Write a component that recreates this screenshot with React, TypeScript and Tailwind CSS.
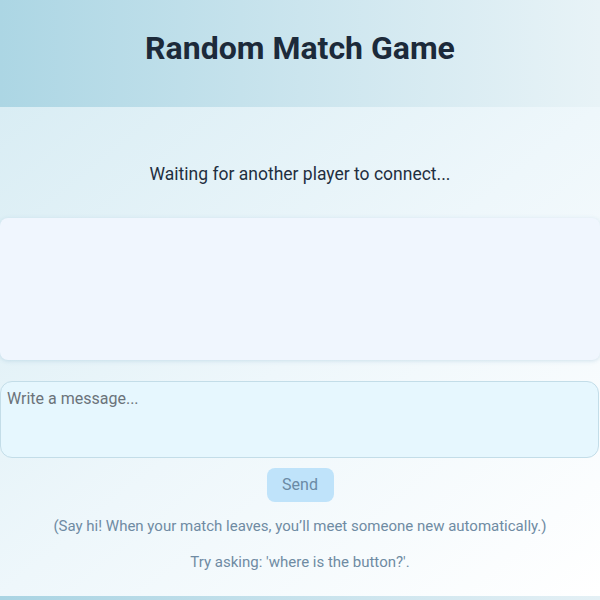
import { useState } from "react";

export default function App() {
  const [msg, setMsg] = useState("");

  return (
    <div className="min-h-[600px] bg-gradient-to-r from-[#a9d4e3] to-[#e4f0f5] font-['Roboto',sans-serif]">
      {/* header */}
      <header className="flex h-[107px] items-center justify-center bg-gradient-to-r from-[#acd6e4] via-[#cbe5ee] to-[#e8f3f7] shadow-[0_2px_6px_rgba(80,140,170,0.35)]">
        <h1 className="pb-3 text-[32px] font-bold text-[#1c2a3a]">Random Match Game</h1>
      </header>

      {/* main panel */}
      <main className="h-[489px] bg-gradient-to-br from-[#d9edf4] via-[#eef7fb] to-[#ffffff] pt-[54px]">
        <p className="text-center text-[17.5px] text-[#1f2f40]">Waiting for another player to connect...</p>

        <div className="mt-[31px] h-[142px] rounded-lg bg-[#f0f6fe] shadow-[0_1px_4px_rgba(120,170,200,0.3)]" />

        <textarea
          value={msg}
          onChange={(e) => setMsg(e.target.value)}
          placeholder="Write a message..."
          className="mt-[21px] block h-[77px] w-[599px] resize-none rounded-xl border border-[#c3dde8] bg-[#e6f7fe] px-[6px] py-[5px] text-[16px] text-[#1f2f40] outline-none placeholder:text-[#6b737a]"
        />

        <div className="mt-[10px] flex justify-center">
          <button className="h-[34px] w-[67px] rounded-lg bg-[#bfe3fa] text-[16px] text-[#6a8aa5]">
            Send
          </button>
        </div>

        <p className="mt-[13px] text-center text-[15px] text-[#6f8ba3]">
          (Say hi! When your match leaves, you’ll meet someone new automatically.)
        </p>
        <p className="mt-[13px] text-center text-[15px] text-[#6f8ba3]">
          Try asking: 'where is the button?'.
        </p>
      </main>
    </div>
  );
}
